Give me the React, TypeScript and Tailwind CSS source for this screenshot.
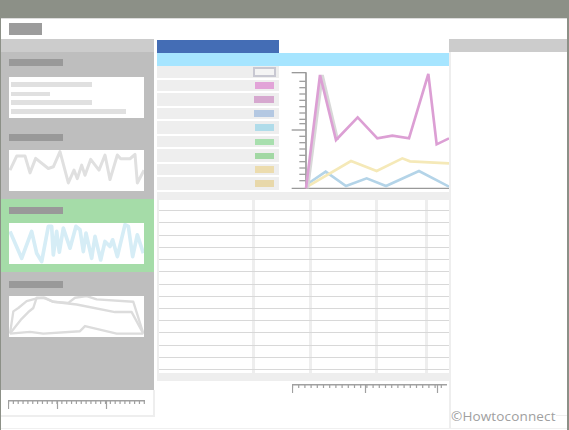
const sidebarLabel = "h-[7px] w-[54px] bg-[#999999]";
const chartBox = "block h-[41px] w-[135px] bg-white";

const swatches = [
  { h: "h-[12px]", color: "h-[10px] w-[23px] mr-[-2px] border-2 border-[#c8c8d2] bg-[#f4f4f4]" },
  { h: "h-[11px]", color: "h-[7px] w-[19px] bg-[#e2a4d8]" },
  { h: "h-[13px]", color: "h-[7px] w-[20px] bg-[#d6a8cf]" },
  { h: "h-[11px]", color: "h-[7px] w-[20px] bg-[#b4c8e2]" },
  { h: "h-[13px]", color: "h-[7px] w-[19px] bg-[#b0dcea]" },
  { h: "h-[11px]", color: "h-[6px] w-[19px] bg-[#a8dfae]" },
  { h: "h-[13px]", color: "h-[6px] w-[19px] bg-[#a2d8a4]" },
  { h: "h-[11px]", color: "h-[7px] w-[19px] bg-[#ecdcae]" },
  { h: "h-[13px]", color: "h-[7px] w-[19px] bg-[#e8d8aa]" },
];

const rowHeights = [
  "h-[11px]",
  "h-[12px]",
  "h-[13px]",
  "h-[12px]",
  "h-[12px]",
  "h-[12px]",
  "h-[13px]",
  "h-[12px]",
  "h-[12px]",
  "h-[12px]",
  "h-[12px]",
  "h-[13px]",
  "h-[12px]",
  "h-[12px]",
];

function Spark({
  view,
  lines,
  color,
  width = 6,
}: {
  view: string;
  lines: string[];
  color: string;
  width?: number;
}) {
  return (
    <svg viewBox={view} preserveAspectRatio="none" className={chartBox}>
      {lines.map((points, i) => (
        <polyline
          key={i}
          points={points}
          fill="none"
          stroke={color}
          strokeWidth={width}
          strokeLinejoin="round"
        />
      ))}
    </svg>
  );
}

function Ruler({
  width,
  step,
  majors,
}: {
  width: number;
  step: number;
  majors: number[];
}) {
  const ticks: number[] = [];
  for (let x = 0; x < width; x += step) ticks.push(x);
  return (
    <svg width={width} height={10} className="block">
      <line x1={0} y1={0.75} x2={width} y2={0.75} stroke="#a0a0a0" strokeWidth={1.5} />
      {ticks.map((x) => (
        <line
          key={x}
          x1={x + 0.5}
          y1={0}
          x2={x + 0.5}
          y2={4}
          stroke="#a0a0a0"
          strokeWidth={1.2}
        />
      ))}
      {majors.map((x) => (
        <line
          key={x}
          x1={x + 0.5}
          y1={0}
          x2={x + 0.5}
          y2={9}
          stroke="#a0a0a0"
          strokeWidth={1.2}
        />
      ))}
    </svg>
  );
}

function MainChart() {
  const minor = [
    244, 263, 282, 301, 320, 339, 358, 371, 409, 428, 447, 466, 485, 504, 523,
    542,
  ];
  return (
    <svg viewBox="0 198 492 378" className="block h-[126px] w-[164px]">
      <line x1="63" y1="217" x2="63" y2="565" stroke="#999999" strokeWidth="5" />
      <line x1="20" y1="565" x2="492" y2="565" stroke="#999999" strokeWidth="4" />
      <line x1="20" y1="218" x2="63" y2="218" stroke="#999999" strokeWidth="4" />
      <line x1="20" y1="390" x2="63" y2="390" stroke="#999999" strokeWidth="4" />
      {minor.map((y) => (
        <line key={y} x1="43" y1={y} x2="63" y2={y} stroke="#a0a0a0" strokeWidth="4" />
      ))}
      <polyline
        points="63,555 122,515 183,558 245,535 303,558 402,513 492,560"
        fill="none"
        stroke="#b4d4e8"
        strokeWidth="8"
      />
      <polyline
        points="63,562 198,483 275,513 352,475 375,484 492,490"
        fill="none"
        stroke="#f5e9b8"
        strokeWidth="8"
      />
      <polyline
        points="68,565 112,225 158,420"
        fill="none"
        stroke="#d8d8d8"
        strokeWidth="9"
      />
      <polyline
        points="63,565 105,225 153,420 218,352 277,415 322,407 372,415 430,222 455,433 492,415"
        fill="none"
        stroke="#dc9fd4"
        strokeWidth="8"
      />
    </svg>
  );
}

export default function App() {
  return (
    <div className="flex h-[430px] w-[569px] flex-col overflow-hidden bg-[#8c9087] pt-[18px] pl-px pr-[2px]">
      <div className="flex min-h-0 flex-1 flex-col border-t border-[#dddddd] bg-white pb-px">
        <div className="flex h-[20px] shrink-0 items-start pl-[8px] pt-[4px]">
          <div className="h-[12px] w-[33px] bg-[#9c9c9c]" />
        </div>

        <div className="flex min-h-0 flex-1 border-b border-[#f0f0f0]">
          {/* left sidebar */}
          <div className="flex w-[156px] shrink-0 flex-col">
            <div className="flex h-[351px] w-[153px] flex-col bg-[#bebebe]">
              <div className="h-[13px] bg-[#cccccc]" />
              <div className="flex flex-col pl-[8px] pt-[7px]">
                <div className={sidebarLabel} />
                <div className="mt-[11px] flex h-[41px] w-[135px] flex-col items-start bg-white pl-[2px] pt-[5px]">
                  <div className="h-[5px] w-[81px] bg-[#e0e0e0]" />
                  <div className="mt-[5px] h-[4px] w-[39px] bg-[#e0e0e0]" />
                  <div className="mt-[4px] h-[5px] w-[81px] bg-[#e0e0e0]" />
                  <div className="mt-[4px] h-[5px] w-[115px] bg-[#e0e0e0]" />
                </div>
              </div>
              <div className="flex flex-col pl-[8px] pt-[16px]">
                <div className={sidebarLabel} />
                <div className="mt-[9px]">
                  <Spark
                    view="27 450 405 122"
                    color="#e0e0e0"
                    width={9}
                    lines={[
                      "30,510 50,468 75,468 90,518 107,475 145,505 160,500 180,455 205,548 222,510 232,535 245,495 255,525 272,478 297,510 315,465 330,538 352,465 362,476 390,476 405,463 412,548 432,510",
                    ]}
                  />
                </div>
              </div>
              <div className="mt-[8px] flex h-[73px] flex-col bg-[#a5dca8] pl-[8px] pt-[8px]">
                <div className={sidebarLabel} />
                <div className="mt-[9px]">
                  <Spark
                    view="27 25 405 122"
                    color="#d6edf6"
                    width={11}
                    lines={[
                      "30,50 65,130 95,50 110,115 125,140 145,35 155,35 160,120 170,50 178,112 190,40 210,100 228,35 240,45 250,110 258,55 275,130 285,65 302,135 315,80 330,95 338,75 352,125 375,30 385,35 398,125 412,60 430,115",
                    ]}
                  />
                </div>
              </div>
              <div className="flex flex-col pl-[8px] pt-[9px]">
                <div className={sidebarLabel} />
                <div className="mt-[8px]">
                  <Spark
                    view="27 245 405 120"
                    color="#dcdcdc"
                    width={7}
                    lines={[
                      "30,355 40,290 55,280 80,260 110,252 135,250 160,262 205,265 225,250 260,245 290,255 400,262 430,355",
                      "30,355 62,315 85,292 100,280 110,250 130,250 160,262 230,270 345,292 395,292 430,355",
                      "30,355 90,350 130,355 240,348 255,333 350,355 430,355",
                    ]}
                  />
                </div>
              </div>
            </div>
            <div className="flex h-[27px] w-[154px] flex-col border-r-2 border-b-2 border-[#eeeeee] pl-[7px] pt-[10px]">
              <Ruler width={137} step={4.85} majors={[0, 49, 98]} />
            </div>
          </div>

          {/* middle column */}
          <div className="flex w-[292px] shrink-0 flex-col pt-px">
            <div className="h-[13px] w-[122px] bg-[#446db5]" />
            <div className="h-[13px] bg-[#a6e5ff]" />
            <div className="flex h-[126px]">
              <div className="flex w-[122px] shrink-0 flex-col gap-[2px]">
                {swatches.map((row, i) => (
                  <div
                    key={i}
                    className={`flex shrink-0 items-center justify-end bg-[#eeeeee] pr-[5px] ${row.h}`}
                  >
                    <div className={row.color} />
                  </div>
                ))}
              </div>
              <div className="ml-[6px]">
                <MainChart />
              </div>
            </div>
            <div className="bg-[#eeeeee] pl-[2px] pt-[8px]">
              {rowHeights.map((h, i) => (
                <div
                  key={i}
                  className={`grid grid-cols-[93px_54px_63px_47px_21px] gap-x-[3px] border-b border-[#d8d8d8] ${h}`}
                >
                  <div className="bg-white" />
                  <div className="bg-white" />
                  <div className="bg-white" />
                  <div className="bg-white" />
                  <div className="bg-white" />
                </div>
              ))}
              <div className="grid h-[3px] grid-cols-[93px_54px_63px_47px_21px] gap-x-[3px]">
                <div className="bg-white" />
                <div className="bg-white" />
                <div className="bg-white" />
                <div className="bg-white" />
                <div className="bg-white" />
              </div>
              <div className="h-[8px]" />
            </div>
            <div className="pl-[135px] pt-[3px]">
              <Ruler width={155} step={6.2} majors={[0, 73, 145]} />
            </div>
          </div>

          {/* right panel */}
          <div className="relative flex min-w-0 flex-1 flex-col">
            <div className="h-[13px] bg-[#cccccc]" />
            <div className="flex-1 border-l-2 border-[#eeeeee]">
              <div className="mt-[363px] h-px bg-[#eeeeee]" />
            </div>
            <div className="absolute left-[2px] top-[368px] bg-white font-['Open_Sans',sans-serif] text-[13.5px] leading-[18px] tracking-[0.15px] text-[#a0a0a0]">
              ©Howtoconnect
            </div>
          </div>
        </div>
      </div>
    </div>
  );
}
